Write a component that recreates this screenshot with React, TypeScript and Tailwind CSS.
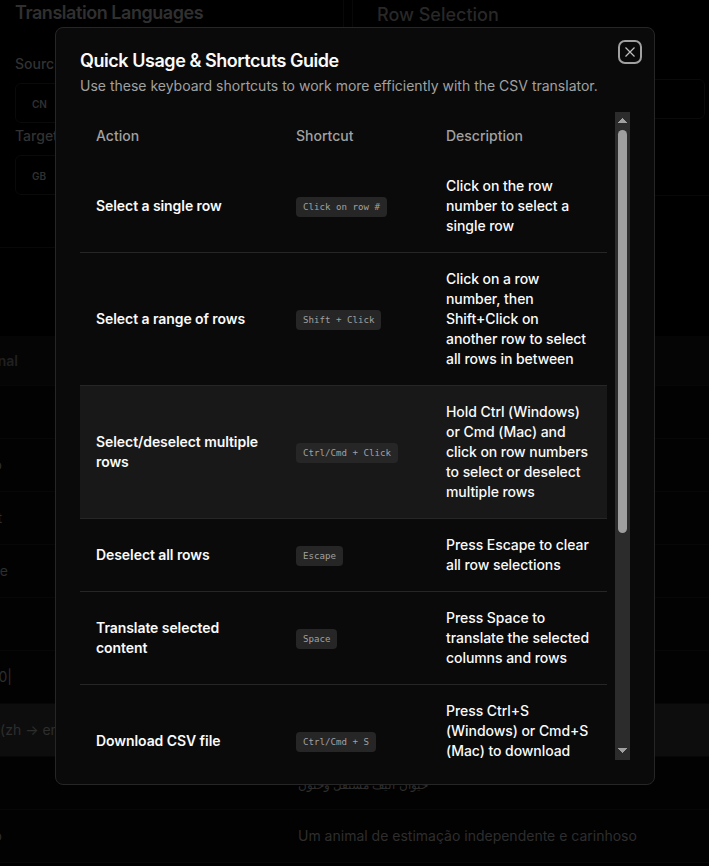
import React from "react";

type Shortcut = { action: string; keys: string; description: string; active?: boolean };

const shortcuts: Shortcut[] = [
  { action: "Select a single row", keys: "Click on row #", description: "Click on the row number to select a single row" },
  { action: "Select a range of rows", keys: "Shift + Click", description: "Click on a row number, then Shift+Click on another row to select all rows in between" },
  { action: "Select/deselect multiple rows", keys: "Ctrl/Cmd + Click", description: "Hold Ctrl (Windows) or Cmd (Mac) and click on row numbers to select or deselect multiple rows", active: true },
  { action: "Deselect all rows", keys: "Escape", description: "Press Escape to clear all row selections" },
  { action: "Translate selected content", keys: "Space", description: "Press Space to translate the selected columns and rows" },
  { action: "Download CSV file", keys: "Ctrl/Cmd + S", description: "Press Ctrl+S (Windows) or Cmd+S (Mac) to download the CSV file" },
];

const rows = [
  { left: "", width: "w-0", text: "" },
  { left: "o", width: "w-[2px]", text: "" },
  { left: "t", width: "w-[2px]", text: "" },
  { left: "e", width: "w-[8px]", text: "" },
  { left: "", width: "w-0", text: "" },
  { left: "0|", width: "w-[12px]", text: "" },
  { left: "(zh → en)", width: "w-[64px]", text: "", active: true },
  { left: "", width: "w-0", text: "حيوان أليف مستقل وحنون", rtl: true },
  { left: "o", width: "w-[2px]", text: "Um animal de estimação independente e carinhoso" },
];

function LanguageField({ label, code }: { label: string; code: string }) {
  return (
    <div className="h-[72px]">
      <div className="h-[30px] pt-px text-sm leading-5 font-medium text-[#323232]">{label}</div>
      <div className="flex h-10 items-center rounded-md border border-[#0a0a0a] pt-0.5 pl-4 text-[10px] font-semibold text-[#303030]">
        {code}
      </div>
    </div>
  );
}

function Page() {
  return (
    <div className="h-[866px] w-[709px] overflow-hidden bg-black">
      <div className="flex h-[336px] gap-2">
        <div className="flex h-[248px] w-[344px] shrink-0 flex-col border-r border-b border-[#080808] pr-4 pl-[15px]">
          <h2 className="h-[53px] pt-px text-lg leading-6 font-semibold tracking-tight text-[#303030]">Translation Languages</h2>
          <LanguageField label="Source" code="CN" />
          <LanguageField label="Target" code="GB" />
        </div>
        <div className="h-[196px] w-[370px] shrink-0 border-b border-l border-[#080808] pr-[17px] pl-6">
          <h2 className="h-[79px] pt-[3px] text-lg leading-6 font-medium text-[#282828]">Row Selection</h2>
          <div className="h-10 rounded-md border border-[#0a0a0a]" />
        </div>
      </div>
      <div className="bg-[#020202]">
        <div className="flex h-[50px] items-center border-b border-[#070707] bg-[#050505]">
          <div className="flex w-[18px] justify-end text-sm font-semibold text-[#202020]">Original</div>
        </div>
        {rows.map((r, i) => (
          <div
            key={i}
            className={`flex h-[53px] items-center border-b border-[#070707] text-sm text-[#2e2e2e] ${r.active ? "bg-[#0d0d0d]" : ""}`}
          >
            <div className="w-[298px] shrink-0">
              <div className={`flex justify-end whitespace-nowrap ${r.width}`}>{r.left}</div>
            </div>
            <div dir={r.rtl ? "rtl" : "ltr"} className={`whitespace-nowrap ${r.rtl ? "pt-1 text-[11.5px]" : ""}`}>{r.text}</div>
          </div>
        ))}
      </div>
    </div>
  );
}

function Scrollbar() {
  return (
    <div className="flex w-[15px] shrink-0 flex-col items-center bg-[#2c2c2c]">
      <svg width="15" height="18" viewBox="0 0 15 18" shapeRendering="crispEdges">
        <path d="M3 11 L7.5 6 L12 11Z" fill="#a0a0a0" />
      </svg>
      <div className="h-[403px] w-[9px] rounded-full bg-[#9f9f9f]" />
      <svg className="mt-auto" width="15" height="18" viewBox="0 0 15 18" shapeRendering="crispEdges">
        <path d="M3 6 L12 6 L7.5 11Z" fill="#a0a0a0" />
      </svg>
    </div>
  );
}

function Dialog() {
  return (
    <div className="absolute top-[27px] left-[55px] flex h-[758px] w-[600px] flex-col rounded-lg border border-[#262626] bg-[#0a0a0a] p-6">
      <h1 className="h-[24px] text-lg leading-[18px] font-semibold tracking-tight text-[#fafafa]">
        Quick Usage &amp; Shortcuts Guide
      </h1>
      <p className="h-9 text-sm leading-5 text-[#a1a1a1]">
        Use these keyboard shortcuts to work more efficiently with the CSV translator.
      </p>
      <div className="flex h-[648px] justify-between overflow-hidden">
        <div className="w-[527px] text-sm leading-5 font-medium">
          <div className="grid h-12 grid-cols-[200px_150px_177px] items-center text-[#a1a1a1]">
            <div className="px-4">Action</div>
            <div className="px-4">Shortcut</div>
            <div className="px-4">Description</div>
          </div>
          {shortcuts.map((s) => (
            <div
              key={s.action}
              className={`grid grid-cols-[200px_150px_177px] items-center border-b border-[#262626] text-[#fafafa] ${s.active ? "bg-[#181818]" : ""}`}
            >
              <div className="p-4 font-semibold tracking-[-0.07px]">{s.action}</div>
              <div className="px-4 pt-px">
                <kbd className="flex h-5 w-fit items-center rounded bg-[#262626] px-[7px] font-['DejaVu_Sans_Mono',monospace] text-[9.14px] whitespace-pre text-[#a1a1a1]">
                  {s.keys}
                </kbd>
              </div>
              <div className="p-4 tracking-[-0.06px]">{s.description}</div>
            </div>
          ))}
        </div>
        <Scrollbar />
      </div>
      <button className="absolute top-3 right-3 flex h-6 w-6 items-center justify-center rounded-[7px] border-2 border-[#a1a1a1]">
        <svg width="16" height="16" viewBox="0 0 16 16" fill="none" className="shrink-0">
          <path d="M3.5 3.5 L12.5 12.5 M12.5 3.5 L3.5 12.5" stroke="#c0c0c0" strokeWidth="1.2" />
        </svg>
      </button>
    </div>
  );
}

export default function App() {
  return (
    <div className="relative h-[866px] w-[709px] overflow-hidden bg-black font-['Inter',sans-serif]">
      <Page />
      <Dialog />
    </div>
  );
}
